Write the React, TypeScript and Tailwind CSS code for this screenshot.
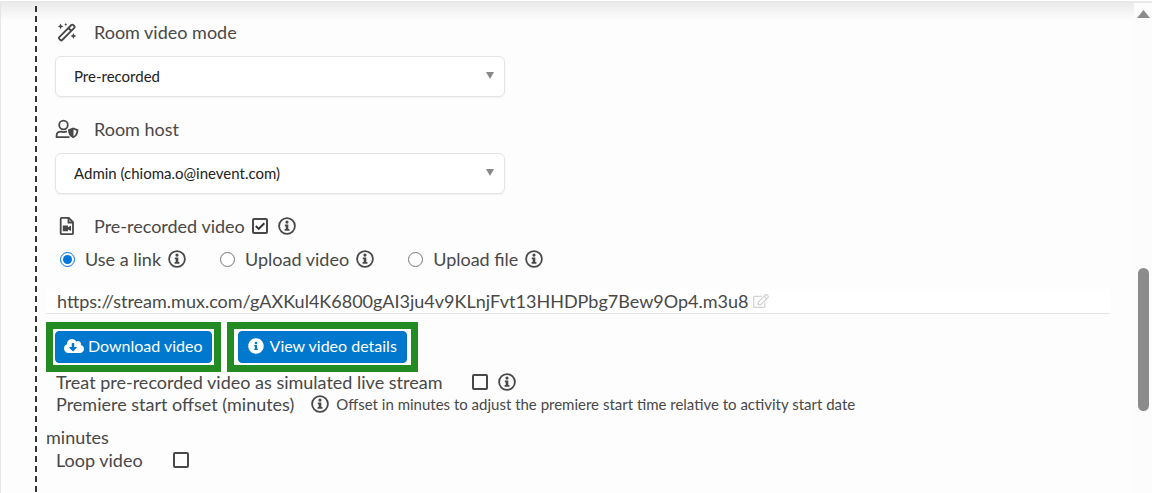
import React, { useState } from 'react';
import { FaCloudDownloadAlt, FaInfoCircle, FaRegEdit } from 'react-icons/fa';

const WandIcon: React.FC = () => (
  <svg viewBox="0 0 20 20" className="h-5 w-5" fill="none" stroke="currentColor" strokeWidth="1.8" aria-hidden="true">
    <path d="M2.3 15.2 14.4 3q.9-.9 1.8 0l1.1 1.1q.9.9 0 1.8L5.2 18q-.9.9-1.8 0l-1.1-1.1q-.9-.8 0-1.7Z" />
    <path d="m11.4 6 2.9 2.9" />
    <g fill="currentColor" stroke="none">
      <path d="m3.6 1.4.9 2 2 .9-2 .9-.9 2-.9-2-2-.9 2-.9ZM16.4 11l.9 2.1 2.1.9-2.1.9-.9 2.1-.9-2.1-2.1-.9 2.1-.9ZM8.8.8l.5 1.1 1.1.5-1.1.5-.5 1.1-.5-1.1-1.1-.5 1.1-.5Z" />
    </g>
  </svg>
);

const HostIcon: React.FC = () => (
  <svg viewBox="0 0 24 20" className="h-5 w-6" fill="none" stroke="currentColor" strokeWidth="1.8" aria-hidden="true">
    <circle cx="8.5" cy="6" r="4.3" />
    <path d="M14.5 18.1H1.6v-1.2c0-2.8 2-4.2 4.4-4.2 1 0 1.5.5 2.5.5s1.5-.5 2.8-.5h.7" />
    <path d="M18.2 8.4 23.4 10.4c0 4.4-1.7 7.2-5.2 8.8-3.5-1.6-5.2-4.4-5.2-8.8Z" fill="currentColor" stroke="none" />
    <path d="M18.5 10.5 21.5 11.7c-.2 2.6-1.2 4.4-3 5.5Z" fill="#fdfdfd" stroke="none" />
  </svg>
);

const VideoFileIcon: React.FC = () => (
  <svg viewBox="0 0 16 20" className="h-5 w-4" fill="none" stroke="currentColor" strokeWidth="1.8" aria-hidden="true">
    <path d="M2.7 1.9h7L14 6.2v11q0 1-1 1H2.7q-1 0-1-1v-14.3q0-1 1-1Z" />
    <path d="M9.5 2v4.5H14" />
    <path d="M3.8 9.4h5.2v1.8l3-1.7v5.6L9 13.4v1.8H3.8Z" fill="currentColor" stroke="none" />
  </svg>
);

const InfoIcon: React.FC = () => (
  <svg viewBox="0 0 20 20" className="h-5 w-5 shrink-0" fill="none" stroke="currentColor" aria-hidden="true">
    <circle cx="10" cy="10" r="7.9" strokeWidth="1.8" />
    <circle cx="10" cy="6.1" r="1.6" fill="currentColor" stroke="none" />
    <path d="M7.8 8.4h3.5v4.5h1.1v1.8H7.6v-1.8h1.1v-2.7h-.9Z" fill="currentColor" stroke="none" />
  </svg>
);

interface SelectFieldProps {
  id: string;
  label: string;
  icon: React.ReactNode;
  option: string;
}

const SelectField: React.FC<SelectFieldProps> = ({ id, label, icon, option }) => (
  <div className="mb-3">
    <label htmlFor={id} className="flex h-6 items-center">
      <span className="flex w-6 justify-center">{icon}</span>
      <span className="ml-[15px]">{label}</span>
    </label>
    <div className="relative mt-3 max-w-[450px]">
      <select
        id={id}
        className="block h-[41px] w-full appearance-none rounded-md border border-[#e4e4e4] bg-white pr-8 pb-[2px] pl-[18px] text-[15px] text-[#222] shadow-xs"
      >
        <option>{option}</option>
      </select>
      <svg viewBox="0 0 8 7" className="pointer-events-none absolute top-4 right-[11px] h-[7px] w-2" aria-hidden="true">
        <path d="M0 0h8L4 7Z" fill="#888" />
      </svg>
    </div>
  </div>
);

interface CheckboxProps {
  id: string;
  defaultChecked?: boolean;
}

const Checkbox: React.FC<CheckboxProps> = ({ id, defaultChecked }) => (
  <span className="relative block h-4 w-4 shrink-0">
    <input
      id={id}
      type="checkbox"
      defaultChecked={defaultChecked}
      className="peer block h-4 w-4 appearance-none rounded-[2px] border-2 border-[#484848]"
    />
    <svg
      viewBox="0 0 16 16"
      className="pointer-events-none absolute inset-0 hidden h-4 w-4 peer-checked:block"
      fill="none"
      stroke="#333"
      strokeWidth="2"
      aria-hidden="true"
    >
      <path d="m3.8 8 2.9 2.9 5.6-5.6" />
    </svg>
  </span>
);

const SOURCES = [
  { value: 'link', label: 'Use a link' },
  { value: 'upload', label: 'Upload video' },
  { value: 'file', label: 'Upload file' },
];

const App: React.FC = () => {
  const [source, setSource] = useState('link');
  const [url, setUrl] = useState('https://stream.mux.com/gAXKul4K6800gAI3ju4v9KLnjFvt13HHDPbg7Bew9Op4.m3u8');

  return (
    <div className="flex min-h-screen flex-col bg-[#fdfdfd] font-[Lato,sans-serif] text-[18px] leading-6 text-[#484848]">
      <div className="h-[3px] border-b-2 border-[#e9e9e9] bg-white" />
      <div className="flex grow border-l border-[#e6e6e6]">
        <main className="flex grow bg-linear-to-b from-[#ebebeb] to-[#fdfdfd] to-[18px] pl-[34px]">
          <div className="mt-[3px] w-[2px] shrink-0 bg-[repeating-linear-gradient(to_bottom,#333_0px,#333_6px,transparent_6px,transparent_10px)]" />
          <form className="grow pt-[17px] pr-6 pl-[9px]" onSubmit={(e) => e.preventDefault()}>
            <div className="pl-[9px]">
              <SelectField id="mode" label="Room video mode" icon={<WandIcon />} option="Pre-recorded" />
              <div className="pt-2">
                <SelectField id="host" label="Room host" icon={<HostIcon />} option="Admin (chioma.o@inevent.com)" />
              </div>
              <div className="flex h-6 items-center pt-4">
                <span className="flex w-6 justify-center">
                  <VideoFileIcon />
                </span>
                <label htmlFor="prerecorded" className="mr-[7px] ml-[15px]">Pre-recorded video</label>
                <Checkbox id="prerecorded" defaultChecked />
                <span className="ml-[9px]">
                  <InfoIcon />
                </span>
              </div>
              <div className="mt-[17px] flex h-6 items-center gap-7">
                {SOURCES.map((item) => (
                  <label key={item.value} className="flex items-center">
                    <input
                      type="radio"
                      name="source"
                      value={item.value}
                      checked={source === item.value}
                      onChange={() => setSource(item.value)}
                      className="mr-[10px] ml-[5px] h-[15px] w-[15px] accent-[#0075dd]"
                    />
                    <span className="mr-[6px]">{item.label}</span>
                    <InfoIcon />
                  </label>
                ))}
              </div>
            </div>

            <div className="mt-[18px] flex h-[25px] items-center border-b border-[#e6e6e6] bg-white pl-[11px]">
              <input
                aria-label="Video link"
                type="text"
                value={url}
                onChange={(e) => setUrl(e.target.value)}
                className="block h-6 bg-transparent [field-sizing:content]"
              />
              <button type="button" aria-label="Edit link" className="ml-[5px] text-[#d4d4d4]">
                <FaRegEdit className="h-4 w-4" />
              </button>
            </div>

            <div className="mt-2 flex gap-[6px] text-[16px]">
              <div className="border-7 border-[#228b22] bg-white p-[2px]">
                <button
                  type="button"
                  className="flex h-8 items-center gap-1 rounded-[4px] border border-[#0073c6] bg-[#0078ce] px-2 pb-[2px] text-white"
                >
                  <FaCloudDownloadAlt className="h-5 w-5" />
                  Download video
                </button>
              </div>
              <div className="border-7 border-[#228b22] bg-white px-1 py-[2px]">
                <button
                  type="button"
                  className="flex h-8 items-center gap-[6px] rounded-[4px] border border-[#0073c6] bg-[#0078ce] px-[9px] pb-[2px] text-white"
                >
                  <FaInfoCircle className="h-4 w-4" />
                  View video details
                </button>
              </div>
            </div>

            <div className="flex h-5 items-center pl-[10px]">
              <label htmlFor="simulated" className="mr-[30px]">Treat pre-recorded video as simulated live stream</label>
              <Checkbox id="simulated" />
              <span className="ml-[9px]">
                <InfoIcon />
              </span>
            </div>
            <div className="flex h-6 items-center pl-[10px]">
              <span className="mr-4">Premiere start offset (minutes)</span>
              <InfoIcon />
              <span className="ml-[6px] text-[15px]">
                Offset in minutes to adjust the premiere start time relative to activity start date
              </span>
            </div>
            <p className="mt-[9px] h-[23px]">minutes</p>
            <div className="flex h-[23px] items-center pl-[10px]">
              <label htmlFor="loop" className="mr-[30px]">Loop video</label>
              <Checkbox id="loop" />
            </div>
          </form>
        </main>

        <div className="flex w-[18px] shrink-0 flex-col items-center bg-[#fcfcfc] pt-[7px]" aria-hidden="true">
          <svg viewBox="0 0 13 8" className="h-2 w-[13px]">
            <path d="M6.5 0 13 8H0Z" fill="#8b8b8b" />
          </svg>
          <div className="mt-[250px] h-[143px] w-[11px] rounded-full bg-[#8b8b8b]" />
        </div>
      </div>
    </div>
  );
};

export default App;
